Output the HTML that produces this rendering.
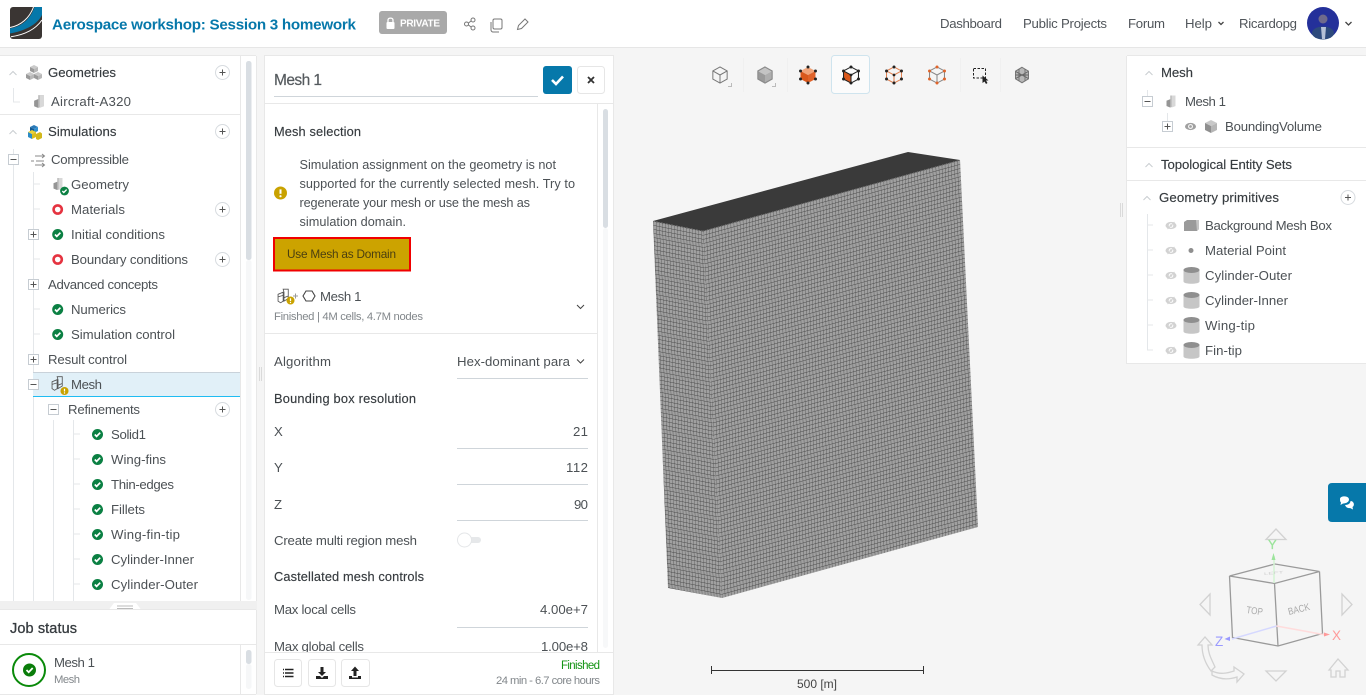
<!DOCTYPE html>
<html lang="en"><head><meta charset="utf-8"><title>Aerospace workshop: Session 3 homework</title>
<style>
html,body{margin:0;padding:0;background:#f5f5f5;width:1366px;height:695px;overflow:hidden}
svg{display:block}
text{font-family:"Liberation Sans",sans-serif;font-size:13.2px;fill:#4c5155}
.m{fill:#363b3f;stroke:#363b3f;stroke-width:.15}
.s{font-size:11.300px;fill:#82878b}
.n{fill:#50555a}
.l{stroke:#e4e7ea;stroke-width:1;fill:none}
</style></head><body>
<svg width="1366" height="695" viewBox="0 0 1366 695" xmlns="http://www.w3.org/2000/svg">
<defs>
<pattern id="mr" patternUnits="userSpaceOnUse" width="1" height="1" patternTransform="matrix(3.06 -.845 .21 4.08 703 231)">
<rect width="1" height="1" fill="#a0a0a0"/><path d="M0 0H1M0 0V1" stroke="#444" stroke-width=".22" fill="none"/></pattern>
<pattern id="ml" patternUnits="userSpaceOnUse" width="1" height="1" patternTransform="matrix(3 .6 .21 4.08 653 221)">
<rect width="1" height="1" fill="#a0a0a0"/><path d="M0 0H1M0 0V1" stroke="#444" stroke-width=".22" fill="none"/></pattern>
<g id="ok"><circle r="5.500" fill="#0b8043"/><path d="M-2.700 0L-.9 1.900L2.700 -1.800" stroke="#fff" stroke-width="1.700" fill="none"/></g>
<g id="err"><circle r="4.100" fill="none" stroke="#e53340" stroke-width="2.600"/></g>
<g id="warn"><circle r="6.500" fill="#c9a200"/><path d="M0 -3.600V.8" stroke="#fff" stroke-width="2"/><circle cy="3.200" r="1.100" fill="#fff"/></g>
<g id="pc"><circle r="7" fill="#fff" stroke="#d7dbdf"/><path d="M-3 0H3M0 -3V3" stroke="#555" stroke-width="1"/></g>
<g id="pb"><rect x="-5" y="-5" width="10" height="10" fill="#fff" stroke="#c6ccd2"/><path d="M-3 0H3M0 -3V3" stroke="#555"/></g>
<g id="mb"><rect x="-5" y="-5" width="10" height="10" fill="#fff" stroke="#c6ccd2"/><path d="M-3 0H3" stroke="#555"/></g>
<g id="up"><path d="M-3.500 2L0 -1.500L3.500 2" stroke="#c9cdd0" fill="none"/></g>
<g id="cu"><path d="M0 -4L4 -2L0 0L-4 -2Z" fill="#cacaca"/><path d="M-4 -2L0 0V4L-4 2Z" fill="#9a9a9a"/><path d="M4 -2L0 0V4L4 2Z" fill="#b8b8b8"/></g>
<g id="blk"><path d="M-1 -8L6 -8V6L-1 8L-6 6V-1L-1 -3Z" fill="#bcbcbc"/><path d="M-1 -3V8L-6 6V-1Z" fill="#959595"/><path d="M1 -8H6V6L1 8Z" fill="#d8d8d8"/></g>
<g id="msh" fill="none" stroke="#555" stroke-width="1"><path d="M-1 -8H5V3L0 6V-4.500ZM-7 -2L-1 -4.500V6L-4 8L-7 6Z"/><path d="M-7 1L0 -1M0 2L5 0"/></g>
<g id="eye"><ellipse rx="5.500" ry="3.600" fill="#a0a0a0"/><circle r="2.400" fill="#fff"/><circle r="1.400" fill="#a0a0a0"/></g>
<g id="eyx"><ellipse rx="5.500" ry="3.600" fill="#d2d2d2"/><circle r="2.300" fill="#fff"/><circle r="1.300" fill="#d2d2d2"/><path d="M-3.500 3.500L3.500 -3.500" stroke="#d2d2d2"/></g>
<g id="cyl"><path d="M-8 -6V6C-8 9 8 9 8 6V-6Z" fill="#c6c6c6"/><ellipse cy="-5.500" rx="8" ry="3" fill="#8f8f8f"/></g>
</defs>

<rect width="1366" height="695" fill="#f5f5f5"/>
<!-- header -->
<rect width="1366" height="47" fill="#fff"/><path d="M0 47.500H1366" stroke="#e6e6e6"/>
<rect x="10" y="7" width="32" height="32" rx="3" fill="#3a3533"/>
<path d="M34.500 7H42V15C37 25 24 31 10 33.500V28.500C22 26.500 30.500 19 34.500 7Z" fill="#0678aa"/>
<path d="M42 20C35 30 23 35 11 36.700M33.500 7C29.500 18 21 25.500 10 27.500" stroke="#fff" stroke-width="1" fill="none"/>
<text x="52" y="29.500" textLength="304" style="font-size:15.200px;font-weight:bold;fill:#0678aa">Aerospace workshop: Session 3 homework</text>
<rect x="379" y="11" width="68" height="23" rx="3" fill="#a9a9a9"/>
<rect x="386.500" y="22" width="8" height="7" rx="1" fill="#fff"/><path d="M388 22V20C388 17.500 393 17.500 393 20V22" stroke="#fff" stroke-width="1.300" fill="none"/>
<text x="400" y="26.500" textLength="40" style="font-size:10px;font-weight:bold;fill:#fff">PRIVATE</text>
<g fill="none" stroke="#777" stroke-width="1"><circle cx="466.500" cy="24" r="2"/><circle cx="473" cy="20" r="2"/><circle cx="473" cy="28" r="2"/><path d="M468.500 23L471 21M468.500 25L471 27"/>
<rect x="493" y="19" width="9" height="10" rx="1.500"/><path d="M491 22V30C491 31 492 32 493 32H499"/>
<path d="M517.500 29.500L518.500 25.500L525 19L528 22L521.500 28.500Z"/></g>
<text class="n" x="940" y="28" textLength="62">Dashboard</text>
<text class="n" x="1023" y="28" textLength="84">Public Projects</text>
<text class="n" x="1128" y="28" textLength="37">Forum</text>
<text class="n" x="1185" y="28" textLength="27">Help</text>
<path d="M1218.500 22L1221 24.500L1223.500 22" stroke="#444" stroke-width="1.300" fill="none"/>
<text class="n" x="1239" y="28" textLength="58">Ricardopg</text>
<circle cx="1323" cy="23" r="16" fill="#24309a"/><ellipse cx="1323" cy="33" rx="11" ry="6.500" fill="#2d4a7c"/><circle cx="1323" cy="19" r="4.500" fill="#6f6a8c"/><path d="M1321 27H1326L1325 39H1322Z" fill="#b5c0d6"/>
<path d="M1345.500 22L1348.500 25L1351.500 22" stroke="#444" stroke-width="1.300" fill="none"/>

<!-- left panel -->
<rect x="0" y="56" width="256" height="548" fill="#fff"/>
<path d="M0 55.500H241M240.500 56V604M241 55.500H256M256.500 56V604M0 114.500H240" stroke="#e8e8e8"/>
<rect x="246" y="61" width="5.500" height="199" rx="2.500" fill="#d9dee3"/>
<rect x="246" y="260" width="5.500" height="340" rx="2.500" fill="#f6f7f8"/>
<path class="l" d="M13.500 88V102H20M13.500 149V604M33.500 172V604M53.500 420V604M73.500 420V604"/>
<path class="l" d="M34 184H40M34 209H40M34 259H40M34 309H40M34 334H40M74 434H80M74 459H80M74 484H80M74 509H80M74 534H80M74 559H80M74 584H80"/>
<use href="#up" x="13" y="73"/><use href="#up" x="13" y="132"/>
<use href="#cu" x="34" y="69"/><use href="#cu" x="30" y="76"/><use href="#cu" x="38" y="76"/>
<text class="m" x="48" y="77" textLength="68">Geometries</text><use href="#pc" x="222.500" y="72.500"/>
<use href="#blk" transform="translate(39 101.500) scale(.8)"/>
<text x="51" y="106" textLength="80">Aircraft-A320</text>
<path d="M34 125L38 127L34 129L30 127Z" fill="#2b7ab8"/><path d="M30 127L34 129V133L30 131Z" fill="#145a92"/><path d="M38 127L34 129V133L38 131Z" fill="#2f8fd0"/>
<path d="M28 132L32 134V139L28 137Z" fill="#2c8cc6"/><path d="M32 134L28 132L32 130L36 132Z" fill="#e9d23a"/><path d="M32 134L36 132V137L32 139Z" fill="#d9bd1e"/>
<path d="M36 134L40 132L42 133.500V138L38 140L36 139Z" fill="#d2b81c"/>
<text class="m" x="48" y="136" textLength="68.500">Simulations</text><use href="#pc" x="222.500" y="131.500"/>
<use href="#mb" x="13.500" y="159.500"/>
<g stroke="#888" fill="none"><path d="M31 161H34M36 161H44M35 156H44M42 154L44.500 156L42 158M35 165H44M42 163L44.500 165L42 167"/></g>
<text x="51" y="164" textLength="78">Compressible</text>
<use href="#blk" transform="translate(58 184) scale(.75)"/><use href="#ok" transform="translate(64.500 191) scale(.8)"/>
<text x="71" y="189" textLength="58">Geometry</text>
<use href="#err" x="57.700" y="209.500"/><text x="71" y="214" textLength="54">Materials</text><use href="#pc" x="222.500" y="209.500"/>
<use href="#pb" x="33.500" y="234.500"/><use href="#ok" x="57.700" y="234.500"/><text x="71" y="239" textLength="94">Initial conditions</text>
<use href="#err" x="57.700" y="259.500"/><text x="71" y="264" textLength="117">Boundary conditions</text><use href="#pc" x="222.500" y="259.500"/>
<use href="#pb" x="33.500" y="284.500"/><text x="48" y="289" textLength="110">Advanced concepts</text>
<use href="#ok" x="57.700" y="309.500"/><text x="71" y="314" textLength="55">Numerics</text>
<use href="#ok" x="57.700" y="334.500"/><text x="71" y="339" textLength="104">Simulation control</text>
<use href="#pb" x="33.500" y="359.500"/><text x="48" y="364" textLength="79">Result control</text>
<rect x="33" y="372.500" width="207" height="24" fill="#e1f0f8"/><path d="M33 372.500H240" stroke="#c9d2da"/><path d="M33 396.500H240" stroke="#1fbcf2"/>
<use href="#mb" x="33.500" y="384.500"/><use href="#msh" transform="translate(58 383.500) scale(.85)"/><use href="#warn" transform="translate(64.500 391) scale(.62)"/>
<text x="71" y="389" textLength="31">Mesh</text>
<use href="#mb" x="53.500" y="409.500"/><text x="68" y="414" textLength="72">Refinements</text><use href="#pc" x="222.500" y="409.500"/>
<use href="#ok" x="97.500" y="434.500"/><text x="111" y="439" textLength="35">Solid1</text>
<use href="#ok" x="97.500" y="459.500"/><text x="111" y="464" textLength="55">Wing-fins</text>
<use href="#ok" x="97.500" y="484.500"/><text x="111" y="489" textLength="63">Thin-edges</text>
<use href="#ok" x="97.500" y="509.500"/><text x="111" y="514" textLength="34">Fillets</text>
<use href="#ok" x="97.500" y="534.500"/><text x="111" y="539" textLength="69">Wing-fin-tip</text>
<use href="#ok" x="97.500" y="559.500"/><text x="111" y="564" textLength="83">Cylinder-Inner</text>
<use href="#ok" x="97.500" y="584.500"/><text x="111" y="589" textLength="87">Cylinder-Outer</text>
<!-- splitter -->
<rect x="0" y="601" width="257" height="9" fill="#f0f0f0"/>
<path d="M109 609.500L114 603H136L141 609.500Z" fill="#fff"/><path d="M117 606H133M117 608.500H133" stroke="#bbb"/>
<!-- job status -->
<rect x="0" y="610" width="256" height="84" fill="#fff"/>
<path d="M0 609.500H256M256.500 610V694M0 644.500H256M240.500 645V694M0 694.500H256" stroke="#e8e8e8"/>
<text class="m" x="10" y="633" textLength="67" style="font-size:14.500px;stroke-width:.3">Job status</text>
<circle cx="29" cy="670" r="16" fill="none" stroke="#0a8a0a" stroke-width="2"/>
<circle cx="29.500" cy="670" r="6.500" fill="#0a7d0a"/><path d="M26.500 670L28.700 672.200L32.700 668" stroke="#fff" stroke-width="1.800" fill="none"/>
<text x="54" y="667" textLength="41">Mesh 1</text><text class="s" x="54" y="683" textLength="26">Mesh</text>
<rect x="246" y="650" width="5.500" height="14" rx="2.500" fill="#d9dee3"/><rect x="246" y="664" width="5.500" height="25" rx="2.500" fill="#f6f7f8"/>

<!-- handles -->
<path d="M259.500 367V381M261.500 367V381M1120.500 203V217M1122.500 203V217" stroke="#dadada"/>

<!-- centre panel -->
<rect x="265" y="56" width="348" height="638" fill="#fff"/>
<rect x="264.500" y="55.500" width="349" height="639" fill="none" stroke="#e8e8e8"/>
<text x="274" y="85" textLength="48" style="font-size:15.500px;fill:#555a5e;stroke:#555a5e;stroke-width:.2">Mesh 1</text>
<path d="M274 96.500H538" stroke="#cfd5da"/>
<rect x="543" y="66" width="29" height="28" rx="3" fill="#0678aa"/><path d="M552 80L556 84L563 76.500" stroke="#fff" stroke-width="2.600" fill="none"/>
<rect x="577.500" y="66.500" width="27" height="27" rx="3" fill="#fff" stroke="#e6e6e6"/><path d="M588 77L594 83M594 77L588 83" stroke="#333" stroke-width="1.800"/>
<path d="M265 103.500H613M597.500 104V652" stroke="#e8e8e8"/>
<rect x="603" y="109" width="5" height="119" rx="2.500" fill="#d9dee3"/><rect x="603" y="228" width="5" height="420" rx="2.500" fill="#f7f8f9"/>
<text class="m" x="274" y="136" textLength="87" style="font-size:12.800px">Mesh selection</text>
<use href="#warn" x="280.500" y="193"/>
<text x="299.500" y="169" textLength="256.500" style="font-size:12.700px">Simulation assignment on the geometry is not</text>
<text x="299.500" y="188" textLength="275.500" style="font-size:12.700px">supported for the currently selected mesh. Try to</text>
<text x="299.500" y="207" textLength="230.500" style="font-size:12.700px">regenerate your mesh or use the mesh as</text>
<text x="299.500" y="226" textLength="106.500" style="font-size:12.700px">simulation domain.</text>
<rect x="274" y="238" width="136" height="32.500" fill="#cca300" stroke="#f00000" stroke-width="2"/>
<text x="287" y="258" textLength="109" style="font-size:11.800px;fill:#4a3f10">Use Mesh as Domain</text>
<use href="#msh" transform="translate(284 296) scale(.85)"/><use href="#warn" transform="translate(290.500 300.500) scale(.62)"/>
<path d="M293 296H298M295.500 293.500V298.500" stroke="#999"/>
<path d="M303 296L306 291H312L315 296L312 301H306Z" fill="none" stroke="#444" stroke-width="1.100"/>
<text x="320" y="301" textLength="41.500">Mesh 1</text>
<text class="s" x="274" y="320" textLength="149">Finished | 4M cells, 4.7M nodes</text>
<path d="M577 305L580.500 308.500L584 305" stroke="#444" fill="none"/>
<path d="M265 333.500H597" stroke="#e8e8e8"/>
<text x="274" y="366" textLength="57">Algorithm</text>
<text x="457" y="366" textLength="113">Hex-dominant para</text>
<path d="M577 359.500L580.500 363L584 359.500" stroke="#444" fill="none"/>
<path d="M457 378.500H588M457 448.500H588M457 484.500H588M457 520.500H588M457 627.500H588" stroke="#cfd5da"/>
<text class="m" x="274" y="403" textLength="142" style="font-size:12.800px">Bounding box resolution</text>
<text x="274" y="436" textLength="9">X</text><text x="573" y="436" textLength="15">21</text>
<text x="274" y="472" textLength="9">Y</text><text x="566" y="472" textLength="22">112</text>
<text x="274" y="509" textLength="9">Z</text><text x="574" y="509" textLength="14">90</text>
<text x="274" y="545" textLength="143">Create multi region mesh</text>
<rect x="463" y="537" width="18" height="6" rx="3" fill="#e6e8ea"/><circle cx="464.500" cy="540" r="7" fill="#fff" stroke="#e4e6e8"/>
<text class="m" x="274" y="581" textLength="150" style="font-size:12.800px">Castellated mesh controls</text>
<text x="274" y="614" textLength="82">Max local cells</text><text x="540" y="614" textLength="48">4.00e+7</text>
<text x="274" y="651" textLength="90">Max global cells</text><text x="541" y="651" textLength="47">1.00e+8</text>
<rect x="265" y="652" width="348" height="42" fill="#fff"/><path d="M265 652.500H613" stroke="#e8e8e8"/>
<g fill="#fff" stroke="#e6e6e6"><rect x="274.500" y="659.500" width="27" height="27" rx="3"/><rect x="308.500" y="659.500" width="27" height="27" rx="3"/><rect x="341.500" y="659.500" width="28" height="27" rx="3"/></g>
<path d="M285 669.500H293.500M285 673H293.500M285 676.500H293.500M283 669.500H284M283 673H284M283 676.500H284" stroke="#222" stroke-width="1.500"/>
<path d="M320.500 667H323.500V672H326L322 676L318 672H320.500Z" fill="#222"/><path d="M316 676H320L322 678L324 676H328V679H316Z" fill="#222"/>
<path d="M353.500 676V671H351L355 666.500L359 671H356.500V676Z" fill="#222"/><path d="M349 676H352V677.500H358V676H361V679H349Z" fill="#222"/>
<text x="561" y="669" textLength="39" style="font-size:11.500px;fill:#149414">Finished</text>
<text class="s" x="496" y="684" textLength="104">24 min - 6.7 core hours</text>

<!-- toolbar -->
<path d="M743.500 58V92M787.500 58V92M960.500 58V92M1000.500 58V92" stroke="#f0f0f0"/>
<rect x="831.500" y="55.500" width="38" height="38" rx="3" fill="#fbfbfb" stroke="#cfe4ee"/>
<g transform="translate(720 75) scale(1.100 1.150)" fill="none" stroke="#777" stroke-width=".9"><path d="M0 -7L6.500 -3.500V3.500L0 7L-6.500 3.500V-3.500ZM-6.500 -3.500L0 0L6.500 -3.500M0 0V7"/></g>
<path d="M728 86.500H731.500V83" stroke="#bbb" fill="none"/>
<g transform="translate(765 75) scale(1.100 1.150)"><path d="M0 -7L6.500 -3.500L0 0L-6.500 -3.500Z" fill="#c4c4c4"/><path d="M-6.500 -3.500L0 0V7L-6.500 3.500Z" fill="#9a9a9a"/><path d="M6.500 -3.500L0 0V7L6.500 3.500Z" fill="#aeaeae"/><path d="M0 -7L6.500 -3.500V3.500L0 7L-6.500 3.500V-3.500Z" fill="none" stroke="#8a8a8a"/></g>
<path d="M772 86.500H775.500V83" stroke="#bbb" fill="none"/>
<g transform="translate(808 75) scale(1.150)"><path d="M0 -7L6.500 -3.500L0 0L-6.500 -3.500Z" fill="#f0a47a"/><path d="M-6.500 -3.500L0 0V7L-6.500 3.500Z" fill="#d9581c"/><path d="M6.500 -3.500L0 0V7L6.500 3.500Z" fill="#e0632a"/><g fill="#222"><circle cy="-7" r="1.300"/><circle cx="6.500" cy="-3.500" r="1.300"/><circle cx="6.500" cy="3.500" r="1.300"/><circle cy="7" r="1.300"/><circle cx="-6.500" cy="3.500" r="1.300"/><circle cx="-6.500" cy="-3.500" r="1.300"/></g></g>
<g transform="translate(851 75) scale(1.150)"><path d="M-6.500 -3.500L0 0V7L-6.500 3.500Z" fill="#d9581c"/><path d="M0 -7L6.500 -3.500V3.500L0 7L-6.500 3.500V-3.500ZM-6.500 -3.500L0 0L6.500 -3.500M0 0V7" fill="none" stroke="#222" stroke-width=".9"/><g fill="#222"><circle cy="-7" r="1.300"/><circle cx="6.500" cy="-3.500" r="1.300"/><circle cx="6.500" cy="3.500" r="1.300"/><circle cy="7" r="1.300"/><circle cx="-6.500" cy="3.500" r="1.300"/><circle cx="-6.500" cy="-3.500" r="1.300"/><circle r="1.200"/></g></g>
<g transform="translate(894 75) scale(1.150)"><path d="M0 -7L6.500 -3.500V3.500L0 7L-6.500 3.500V-3.500ZM-6.500 -3.500L0 0L6.500 -3.500M0 0V7" fill="none" stroke="#e08050" stroke-width=".9"/><g fill="#222"><circle cy="-7" r="1.300"/><circle cx="6.500" cy="-3.500" r="1.300"/><circle cx="6.500" cy="3.500" r="1.300"/><circle cy="7" r="1.300"/><circle cx="-6.500" cy="3.500" r="1.300"/><circle cx="-6.500" cy="-3.500" r="1.300"/><circle r="1.200"/></g></g>
<g transform="translate(937 75) scale(1.150)"><path d="M0 -7L6.500 -3.500V3.500L0 7L-6.500 3.500V-3.500ZM-6.500 -3.500L0 0L6.500 -3.500M0 0V7" fill="none" stroke="#888" stroke-width=".9"/><g fill="#e0642a"><circle cy="-7" r="1.300"/><circle cx="6.500" cy="-3.500" r="1.300"/><circle cx="6.500" cy="3.500" r="1.300"/><circle cy="7" r="1.300"/><circle cx="-6.500" cy="3.500" r="1.300"/><circle cx="-6.500" cy="-3.500" r="1.300"/></g></g>
<rect x="973.500" y="68.500" width="12" height="9.500" fill="none" stroke="#222" stroke-dasharray="2.500 1.500"/>
<path d="M982.500 75.500V83L984.500 81.500L986 84L987.500 83L986 80.500H988.500Z" fill="#222"/>
<g transform="translate(1022 75) scale(1 1.100)"><path d="M0 -7L6.500 -3.500V3.500L0 7L-6.500 3.500V-3.500Z" fill="#b8b8b8" stroke="#777"/><path d="M-3 -5.500V5M3 -5.500V5M-6.500 0L6.500 0M-6 -3L6 3M6 -3L-6 3" stroke="#666" fill="none" stroke-width=".8"/></g>

<!-- mesh box -->
<path d="M653 221L908 152L960 160L703 231Z" fill="#3a3a3a"/>
<path d="M653 221L703 231L722 598L668 588Z" fill="url(#ml)"/>
<path d="M703 231L960 160L978 527L722 598Z" fill="url(#mr)"/>

<!-- scale bar -->
<path d="M711.500 666V674M923.500 666V674M711 670.500H924" stroke="#333"/>
<text x="797" y="688" textLength="40" style="font-size:12px;fill:#444">500 [m]</text>

<!-- right panel -->
<rect x="1127" y="56" width="239" height="307" fill="#fff"/>
<path d="M1126.500 56V363.500H1366M1127 55.500H1366M1127 147.500H1366M1127 180.500H1366" stroke="#e8e8e8" fill="none"/>
<use href="#up" x="1149" y="73"/><text class="m" x="1161" y="77" textLength="32">Mesh</text>
<path class="l" d="M1147.500 90V96M1167.500 113V121"/>
<use href="#mb" x="1147.500" y="101.500"/><use href="#blk" transform="translate(1171 101.500) scale(.75)"/><text x="1185" y="106" textLength="41">Mesh 1</text>
<use href="#pb" x="1167.500" y="126.500"/><use href="#eye" x="1190.500" y="126.500"/>
<path d="M1211 120L1217 123L1211 126L1205 123Z" fill="#c8c8c8"/><path d="M1205 123L1211 126V133L1205 130Z" fill="#8f8f8f"/><path d="M1217 123L1211 126V133L1217 130Z" fill="#b6b6b6"/>
<text x="1225" y="131" textLength="97">BoundingVolume</text>
<use href="#up" x="1149" y="165"/><text class="m" x="1161" y="169" textLength="131">Topological Entity Sets</text>
<use href="#up" x="1147" y="198"/><text class="m" x="1159" y="202" textLength="120">Geometry primitives</text><use href="#pc" x="1348" y="197.500"/>
<path class="l" d="M1147.500 214V350H1153M1148 225H1153M1148 250H1153M1148 275H1153M1148 300H1153M1148 325H1153"/>
<use href="#eyx" x="1171" y="225.500"/><path d="M1184 222L1187 220H1199V229L1197 231H1184Z" fill="#9a9a9a"/><path d="M1196 220H1199V229L1197 231Z" fill="#c4c4c4"/>
<text x="1205" y="230" textLength="127">Background Mesh Box</text>
<use href="#eyx" x="1171" y="250.500"/><circle cx="1191" cy="250.500" r="2.500" fill="#8f8f8f"/><text x="1205" y="255" textLength="81">Material Point</text>
<use href="#eyx" x="1171" y="275.500"/><use href="#cyl" x="1191.500" y="275.500"/><text x="1205" y="280" textLength="87">Cylinder-Outer</text>
<use href="#eyx" x="1171" y="300.500"/><use href="#cyl" x="1191.500" y="300.500"/><text x="1205" y="305" textLength="83">Cylinder-Inner</text>
<use href="#eyx" x="1171" y="325.500"/><use href="#cyl" x="1191.500" y="325.500"/><text x="1205" y="330" textLength="50">Wing-tip</text>
<use href="#eyx" x="1171" y="350.500"/><use href="#cyl" x="1191.500" y="350.500"/><text x="1205" y="355" textLength="37">Fin-tip</text>

<!-- chat -->
<path d="M1366 483H1332Q1328 483 1328 487V518Q1328 522 1332 522H1366Z" fill="#0678aa"/>
<path d="M1340 499C1340 495.500 1349 495.500 1349 499.500C1349 503 1344 503.500 1343 503.500L1340.500 505L1341 502.500C1340.300 502 1340 501 1340 499Z" fill="#fff"/>
<path d="M1350.500 501C1354 501 1355 505.500 1352.500 507L1353 509.500L1350 508C1348 508.500 1346 507.500 1345 505C1348 505 1350.500 503.500 1350.500 501Z" fill="#fff"/>

<!-- gizmo -->
<g fill="none" stroke="#d2d2d2" stroke-width="1.300">
<path d="M1266 539.500L1276 529L1286 539.500Z"/><path d="M1266 671L1276 681L1286 671Z"/>
<path d="M1210 594V615L1200 604.500Z"/><path d="M1342 594V615L1352 604.500Z"/>
<path d="M1329 670L1338 659L1348 670H1345V677H1340V671H1336V677H1331V670Z"/>
<path d="M1198 645L1205 637L1212 645H1208C1208 654 1212 660 1215 667L1211 671C1205 663 1202 654 1202 645Z"/>
<path d="M1212 671C1220 675 1228 673 1234 671V667L1244 674L1237 682V677C1228 680 1219 679 1212 675Z"/>
</g>
<g fill="none" stroke="#9a9a9a" stroke-width="1.300">
<path d="M1229.500 576L1274.500 583.500L1319.500 571.500M1229.500 576L1275 564L1319.500 571.500M1229.500 576L1232.500 637.500L1278 646L1322.500 633.500L1319.500 571.500M1274.500 583.500L1278 646"/>
</g>
<path d="M1276.500 626L1232 639" stroke="#d5d8ff" stroke-width="1.500"/><path d="M1276.500 626L1326 635" stroke="#ffdcdc" stroke-width="1.500"/><path d="M1274 583V556" stroke="#d4f4d4" stroke-width="1.500"/>
<path d="M1271.500 560L1273.500 553L1275.500 560Z" fill="#9ce49c"/>
<text x="1268" y="549" style="font-size:13px;fill:#9ce49c;stroke:#9ce49c;stroke-width:.3">Y</text>
<path d="M1224.500 639L1230 636.500V641Z" fill="#9a9aff"/><path d="M1330 634.500L1324 632.500V636.500Z" fill="#ff9a9a"/>
<text x="1215" y="646" style="font-size:13.500px;fill:#9a9aff">Z</text>
<text x="1332" y="640" style="font-size:13.500px;fill:#ff9a9a">X</text>
<text transform="translate(1246 613) rotate(8) scale(.9 1.100)" style="font-size:9px;fill:#aaa">TOP</text>
<text transform="translate(1289 615) rotate(-14) scale(.9 1.100)" style="font-size:9px;fill:#aaa">BACK</text>
<text transform="translate(1264 575) rotate(-5) scale(1 .45)" style="font-size:8px;fill:#d0d0d0">LEFT</text>
</svg>
</body></html>
